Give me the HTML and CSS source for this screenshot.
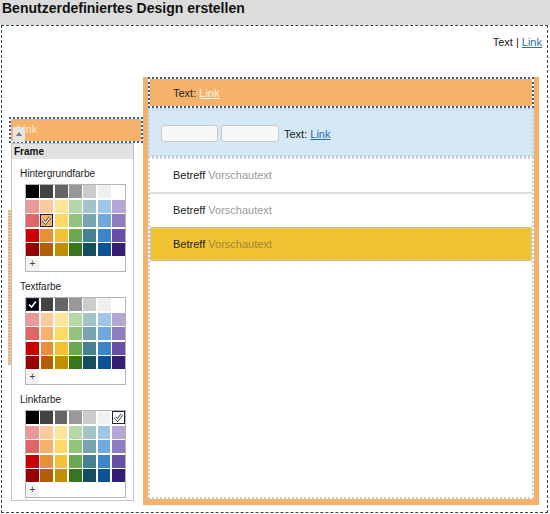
FILE: index.html
```html
<!doctype html>
<html>
<head>
<meta charset="utf-8">
<meta name="viewport" content="width=device-width,initial-scale=1.0"/>
<title>Benutzerdefiniertes Design erstellen</title>
<link rel="stylesheet" href="styles.css">
</head>

<body>
	<h1 class="title">Benutzerdefiniertes Design erstellen</h1>
	<div class="designer">
		<div class="top-links">Text | <a href="#">Link</a></div>
		<div class="stage">
			<div class="side">
				<div class="side-bar">
					<span class="side-toggle"></span>
					<a href="#">Link</a>
				</div>
				<div class="side-strip"></div>
				<div class="picker">
					<div class="picker-head">Frame</div>
					<div class="picker-section">
						<div class="picker-label">Hintergrundfarbe</div>
						<div class="palette" data-selected="2,1"></div>
					</div>
					<div class="picker-section">
						<div class="picker-label">Textfarbe</div>
						<div class="palette" data-selected="0,0"></div>
					</div>
					<div class="picker-section">
						<div class="picker-label">Linkfarbe</div>
						<div class="palette" data-selected="0,6"></div>
					</div>
				</div>
			</div>

			<div class="frame">
				<div class="frame-head">Text: <a href="#">Link</a></div>
				<div class="toolbar">
					<input type="text" class="field">
					<input type="text" class="field wide">
					<span class="toolbar-text">Text: <a href="#">Link</a></span>
				</div>
				<div class="list">
					<div class="row first"><span class="subject">Betreff</span> <span class="preview">Vorschautext</span></div>
					<div class="row"><span class="subject">Betreff</span> <span class="preview">Vorschautext</span></div>
					<div class="row active"><span class="subject">Betreff</span> <span class="preview">Vorschautext</span></div>
				</div>
			</div>
		</div>
	</div>

	<script>
	const colors = [
		['#000000', '#434343', '#666666', '#999999', '#cccccc', '#efefef', '#ffffff'],
		['#ea9999', '#f9cb9c', '#ffe599', '#b6d7a8', '#a2c4c9', '#9fc5e8', '#b4a7d6'],
		['#e06666', '#f6b26b', '#ffd966', '#93c47d', '#76a5af', '#6fa8dc', '#8e7cc3'],
		['#cc0000', '#e69138', '#f1c232', '#6aa84f', '#45818e', '#3d85c6', '#674ea7'],
		['#990000', '#b45f06', '#bf9000', '#38761d', '#134f5c', '#0b5394', '#351c75']
	];

	// kleines Häkchen für die gewählte Farbe
	function check(dark) {
		if (dark) {
			return '<svg viewBox="0 0 11 11" width="11" height="11"><path d="M2 5.5 L4.5 8 L9 2.5" fill="none" stroke="#fff" stroke-width="1.6"/></svg>';
		}
		return '<svg viewBox="0 0 11 11" width="11" height="11"><path d="M2 5.5 L4.5 8 L9 2.5" fill="none" stroke="#333" stroke-width="2.8"/><path d="M2 5.5 L4.5 8 L9 2.5" fill="none" stroke="#fff" stroke-width="1.2"/></svg>';
	}

	document.querySelectorAll('.palette').forEach(palette => {
		const selected = palette.dataset.selected;
		colors.forEach((row, r) => {
			row.forEach((color, c) => {
				const swatch = document.createElement('span');
				swatch.className = 'swatch';
				swatch.style.background = color;
				if (selected === r + ',' + c) {
					swatch.classList.add('selected');
					swatch.innerHTML = check(color === '#000000');
				}
				palette.appendChild(swatch);
			});
		});
		const add = document.createElement('span');
		add.className = 'swatch add';
		add.textContent = '+';
		palette.appendChild(add);
	});
	</script>
</body>
</html>
```

FILE: styles.css
```css
body{
	margin: 0;
	font-family: "Liberation Sans", Arial, sans-serif;
	font-size: 11px;
	color: #222;
	background-color: #fff;
}
a{
	color: #2a6db0;
}
.title{
	margin: 0;
	height: 25px;
	padding-left: 2px;
	background-color: #dcdcdc;
	color: #111;
	font-size: 14px;
	font-weight: bold;
	line-height: 17px;
}
.designer{
	margin: 0 2px 0 1px;
	height: 486px;
	border: 1px dashed #2e4756;
}
.top-links{
	height: 51px;
	box-sizing: border-box;
	padding: 9px 5px 0 0;
	text-align: right;
	line-height: 14px;
}
.stage{
	display: flex;
}

/* linke Spalte mit Farbwähler */
.side{
	position: relative;
	width: 141px;
	padding-top: 40px;
}
.side-bar{
	position: relative;
	z-index: 2;
	margin-left: 7px;
	width: 134px;
	height: 26px;
	box-sizing: border-box;
	padding-left: 6px;
	border: 2px dotted #2f5f9f;
	background: linear-gradient(#f6b26b, #f6b26b) padding-box, linear-gradient(#fff, #fff) border-box;
	line-height: 21px;
	font-size: 11px;
	overflow: visible;
}
.side-bar a{
	color: #fde8d0;
	text-decoration: none;
}
.side-toggle{
	position: absolute;
	left: 2px;
	top: 8px;
	width: 12px;
	height: 15px;
	background-color: #e6e6e6;
}
.side-toggle::after{
	content: "";
	position: absolute;
	left: 3px;
	top: 5px;
	border-left: 3px solid transparent;
	border-right: 3px solid transparent;
	border-bottom: 4px solid #7a7a7a;
}
.side-strip{
	position: absolute;
	left: 6px;
	top: 133px;
	width: 3px;
	height: 155px;
	background: repeating-linear-gradient(#f1b676 0 2px, #d8d4cc 2px 3px);
}
.picker{
	position: relative;
	z-index: 1;
	margin-left: 9px;
	width: 123px;
	height: 358px;
	box-sizing: border-box;
	border: 1px solid #c4c4c4;
	background-color: #fff;
}
.picker-head{
	height: 15px;
	padding-left: 2px;
	background-color: #e2e2e2;
	font-size: 10px;
	font-weight: bold;
	line-height: 15px;
	color: #111;
}
.picker-section{
	padding: 9px 0 0 8px;
}
.picker-label{
	margin-bottom: 4px;
	font-size: 10px;
	line-height: 12px;
}
.palette{
	display: grid;
	grid-template-columns: repeat(7, 1fr);
	grid-auto-rows: 1fr;
	gap: 1.5px;
	margin-left: 5px;
	width: 101px;
	height: 88px;
	box-sizing: border-box;
	border: 1px solid #b5b5b5;
	background-color: #fff;
}
.swatch{
	display: flex;
	align-items: center;
	justify-content: center;
	box-sizing: border-box;
}
.swatch.selected{
	border: 1px solid #1d2350;
}
.swatch.add{
	background-color: #f2f2f2;
	color: #444;
	font-size: 10px;
	line-height: 1;
}

/* Vorschau rechts */
.frame{
	display: flex;
	flex-direction: column;
	width: 396px;
	height: 428px;
	box-sizing: border-box;
	padding: 0 5px 6px 5px;
	background-color: #f6b26b;
}
.frame-head{
	height: 31px;
	box-sizing: border-box;
	padding: 1px 0 0 23px;
	border: 2px dotted #2f5f9f;
	background: linear-gradient(#f6b26b, #f6b26b) padding-box, linear-gradient(#fff, #fff) border-box;
	line-height: 26px;
}
.frame-head a{
	color: #fff6e6;
}
.toolbar{
	display: flex;
	align-items: center;
	gap: 3px;
	height: 49px;
	box-sizing: border-box;
	padding: 2px 0 0 11px;
	border: 2px dotted #c3d2dc;
	background-color: #d5e8f6;
}
.field{
	width: 57px;
	height: 17px;
	box-sizing: border-box;
	margin: 0;
	padding: 0;
	border: 1px solid #c8c8c8;
	border-radius: 3px;
	background-color: #f7f7f7;
}
.field.wide{
	width: 58px;
}
.toolbar-text{
	margin-left: 2px;
}
.list{
	flex: 1;
	border: 2px dotted #c5cfd3;
	background-color: #fff;
}
.row{
	height: 33px;
	padding-left: 23px;
	line-height: 33px;
}
.row.first{
	border-bottom: 2px solid #dedede;
}
.row.active{
	height: 34px;
	box-sizing: border-box;
	padding-left: 21px;
	border: 2px dotted #c2cbc6;
	background-color: #f1c232;
	line-height: 30px;
}
.preview{
	color: #999;
}
.row.active .preview{
	color: #9e8740;
}
```
